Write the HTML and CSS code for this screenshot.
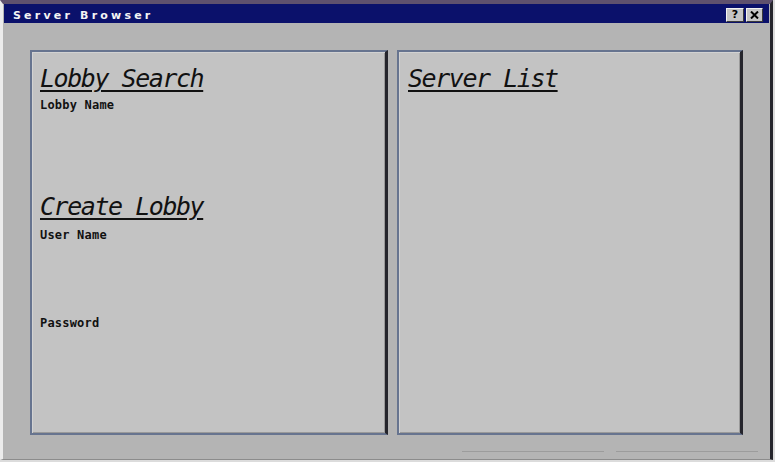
FILE: index.html
```html
<!DOCTYPE html>
<html lang="en">
<head>
    <meta charset="UTF-8">
    <title>Server Browser</title>
    <link rel="stylesheet" href="styles.css">
</head>
<body>
    <div class="window">
        <!-- Title bar -->
        <div class="titlebar">
            <span class="title">Server Browser</span>
            <div class="title-buttons">
                <button class="title-btn">?</button>
                <button class="title-btn">
                    <svg width="9" height="8" viewBox="0 0 9 8">
                        <path d="M1 0.5 L8 7.5 M8 0.5 L1 7.5" stroke="#000" stroke-width="2" fill="none"/>
                    </svg>
                </button>
            </div>
        </div>

        <div class="client">
            <div class="panels">
                <section class="panel panel-left">
                    <h2 class="panel-title">Lobby Search</h2>
                    <div class="field field-search">
                        <span class="field-label">Lobby Name</span>
                    </div>

                    <h2 class="panel-title">Create Lobby</h2>
                    <div class="field field-user">
                        <span class="field-label">User Name</span>
                    </div>
                    <div class="field field-pass">
                        <span class="field-label">Password</span>
                    </div>
                </section>

                <section class="panel panel-right">
                    <h2 class="panel-title">Server List</h2>
                </section>
            </div>
        </div>

        <div class="statusbar">
            <div class="status-cell"></div>
            <div class="status-cell"></div>
        </div>
    </div>
</body>
</html>
```

FILE: styles.css
```css
:root {
    --win-bg: #b4b4b4;
    --panel-bg: #c3c3c3;
    --title-bg: #0b116b;
    --edge-blue: #67748f;
    --edge-dark: #25252c;
    --text: #111;
}

* {
    margin: 0;
    padding: 0;
    box-sizing: border-box;
}

body {
    background: #dcdcdc;
    font-family: "DejaVu Sans Mono", monospace;
    color: var(--text);
}

/* Window frame */
.window {
    width: 773px;
    height: 460px;
    background: var(--win-bg);
    border-top: 4px solid #5f516e;
    border-left: 3px solid #ececec;
    border-right: 3px solid var(--edge-dark);
    border-bottom: 1px solid #8c8c8c;
    display: flex;
    flex-direction: column;
}

/* Title bar */
.titlebar {
    height: 19px;
    margin: 0 1px;
    background: var(--title-bg);
    display: flex;
    justify-content: space-between;
    align-items: flex-start;
    padding: 0 6px 0 9px;
}

.title {
    color: #f4f4f4;
    font-family: "DejaVu Sans", sans-serif;
    font-weight: 700;
    font-size: 11px;
    line-height: 12px;
    letter-spacing: 3.2px;
    padding-top: 6px;
}

.title-buttons {
    display: flex;
    gap: 2px;
    margin-top: 4px;
}

.title-btn {
    width: 18px;
    height: 14px;
    background: #c6c6c6;
    border: 1px solid;
    border-color: #f4f4f4 #3a3a3a #3a3a3a #f4f4f4;
    font-family: "DejaVu Sans", sans-serif;
    font-weight: 700;
    font-size: 11px;
    line-height: 12px;
    color: #000;
    display: flex;
    align-items: center;
    justify-content: center;
}

.title-btn + .title-btn {
    width: 17px;
}

/* Client area */
.client {
    padding: 27px 27px 0;
}

.panels {
    height: 385px;
    display: flex;
    gap: 9px;
}

.panel {
    background: var(--panel-bg);
    border: 2px solid var(--edge-blue);
    border-right: 3px solid var(--edge-dark);
    box-shadow: inset 1px 1px 0 #d2d2d2, inset -1px -1px 0 #9a9a9a;
    padding: 14px 8px;
}

.panel-left {
    flex: 0 0 358px;
}

.panel-right {
    flex: 1;
    padding-left: 9px;
}

.panel-title {
    font-style: italic;
    font-weight: 400;
    font-size: 25px;
    line-height: 26px;
    letter-spacing: -1.45px;
    text-decoration: underline;
    text-decoration-thickness: 2px;
    text-underline-offset: 3px;
}

.field {
    margin-top: 6px;
    height: 96px;
}

.field-user {
    margin-top: 8px;
    height: 88px;
}

.field-pass {
    margin-top: 0;
}

.field-label {
    display: block;
    font-weight: 700;
    font-size: 12px;
    line-height: 14px;
    letter-spacing: 0.2px;
}

/* Status bar */
.statusbar {
    flex: 1;
    display: flex;
    justify-content: flex-end;
    gap: 12px;
    padding: 16px 12px 0;
}

.status-cell {
    width: 142px;
    height: 1px;
    background: #9c9c9c;
}
```
